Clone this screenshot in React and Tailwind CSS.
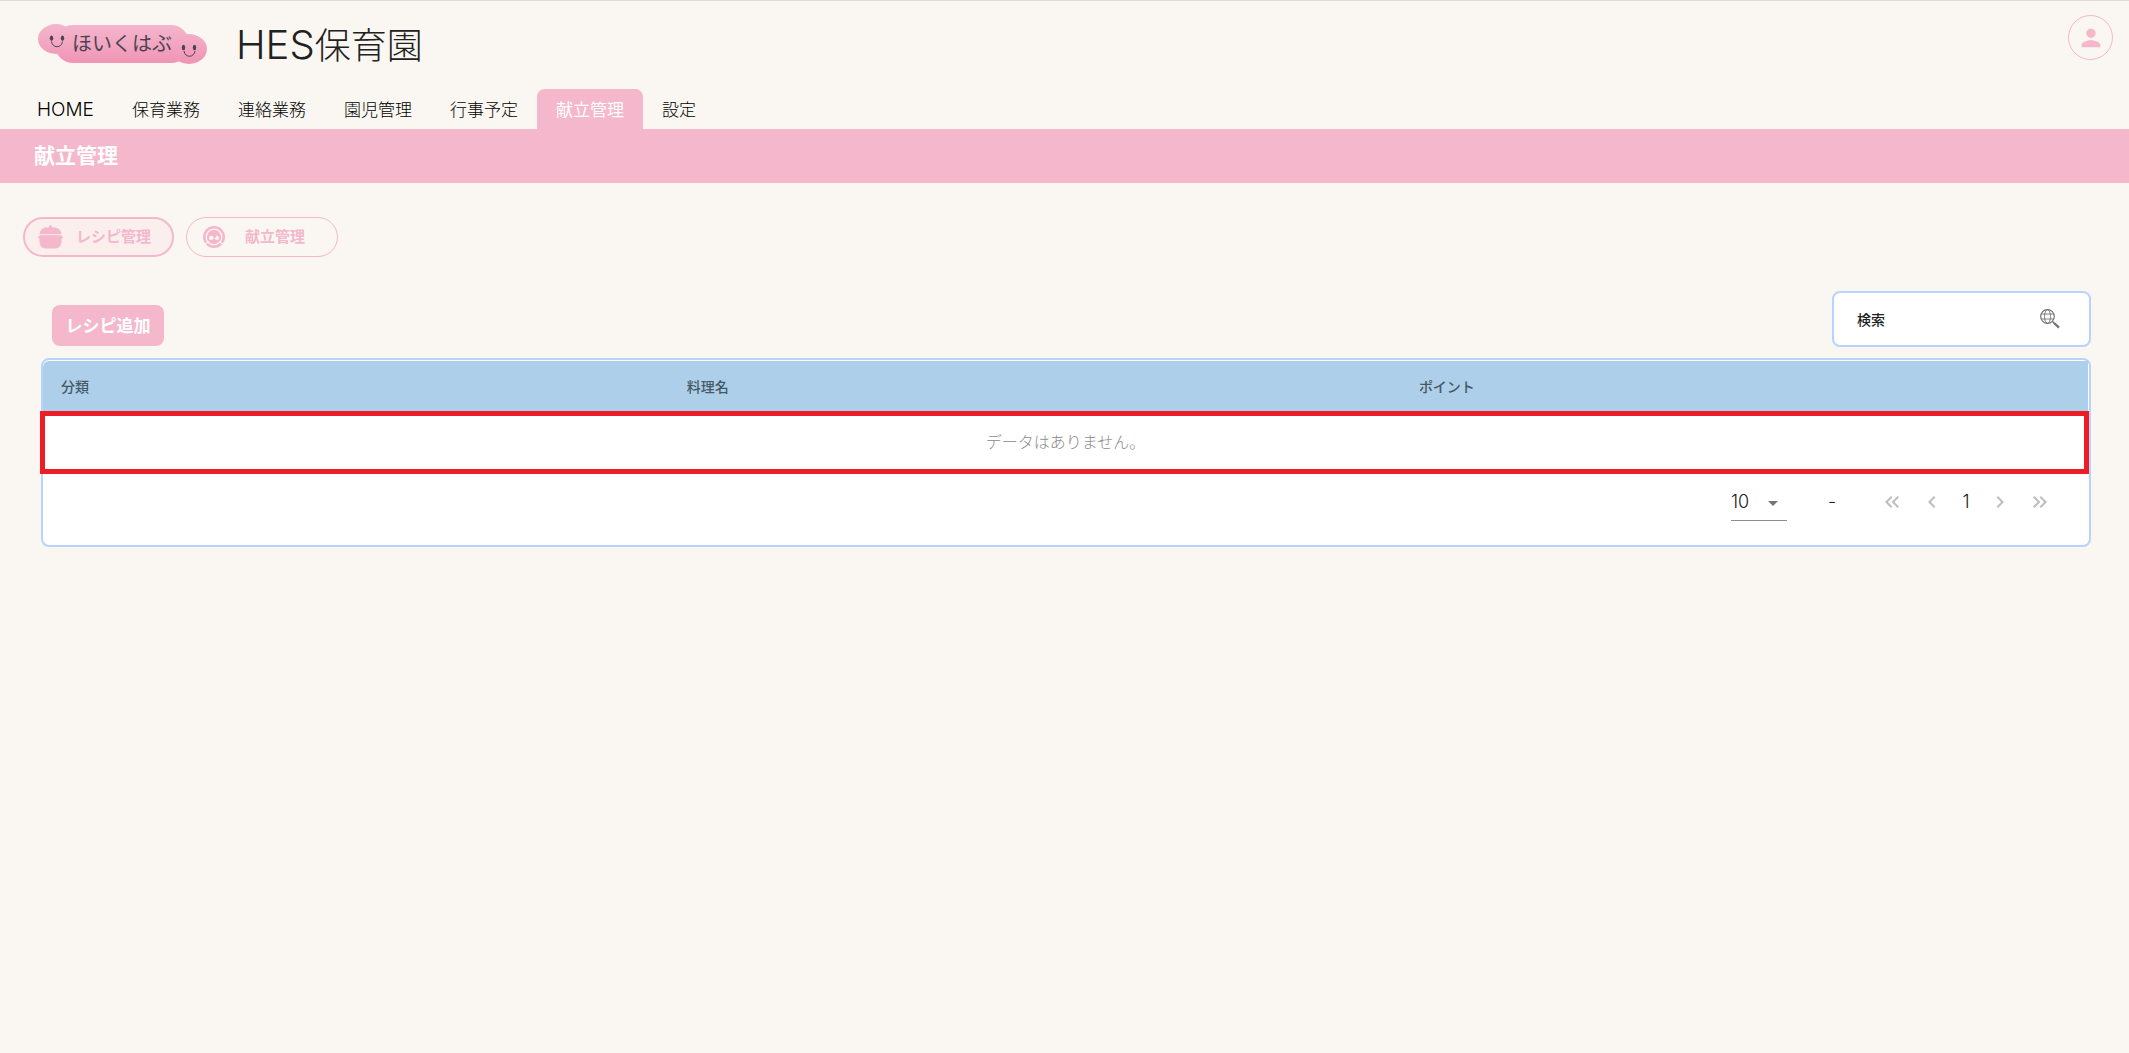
import { useState } from 'react';
import {
  MdPerson,
  MdArrowDropDown,
  MdChevronLeft,
  MdChevronRight,
  MdKeyboardDoubleArrowLeft,
  MdKeyboardDoubleArrowRight,
} from 'react-icons/md';

const navItems = ['HOME', '保育業務', '連絡業務', '園児管理', '行事予定', '献立管理', '設定'];

function Logo() {
  return (
    <svg width="170" height="40" viewBox="0 0 170 40" role="img" aria-label="ほいくはぶ">
      <defs>
        <linearGradient id="logoPink" gradientUnits="userSpaceOnUse" x1="0" y1="0" x2="0" y2="40">
          <stop offset="0" stopColor="#f4b7cd" />
          <stop offset="1" stopColor="#f094b4" />
        </linearGradient>
      </defs>
      <g fill="url(#logoPink)">
        <ellipse cx="18" cy="15" rx="18" ry="15" />
        <rect x="17" y="1" width="134" height="38" rx="18" />
        <ellipse cx="151" cy="25" rx="18" ry="15" />
      </g>
      <g fill="#4a4453">
        <ellipse cx="13.5" cy="14.2" rx="1.7" ry="2.7" />
        <ellipse cx="24.5" cy="14.2" rx="1.7" ry="2.7" />
        <ellipse cx="145.5" cy="23.5" rx="1.7" ry="2.7" />
        <ellipse cx="156.5" cy="23.5" rx="1.7" ry="2.7" />
      </g>
      <g fill="none" stroke="#4a4453" strokeWidth="1">
        <path d="M13.500 17.500c1 7 10 7 11 0" />
        <path d="M146 27c1 7 10 7 11 0" />
      </g>
      <text x="34" y="27" fontSize="20" fill="#4a4453">
        ほいくはぶ
      </text>
    </svg>
  );
}

function PotIcon() {
  return (
    <svg width="26" height="24" viewBox="0 0 26 24" fill="currentColor" aria-hidden="true">
      <circle cx="12.5" cy="2" r="1.7" />
      <path d="M1.500 9.300C2 5 5 2.600 9 2.600h7c4 0 7 2.400 7.500 6.700z" />
      <path d="M1.500 10.200h22v1.300H25v1.600h-1.300c0 7.400-1.700 10.400-6.200 10.400h-10c-4.500 0-6.200-3-6.200-10.400H0v-1.600h1.500z" />
    </svg>
  );
}

function DishIcon() {
  return (
    <svg width="22" height="22" viewBox="0 0 22 22" aria-hidden="true">
      <circle cx="11" cy="11" r="11" fill="#f4b7cc" />
      <circle cx="11" cy="11" r="7.8" fill="none" stroke="#faf7f2" strokeWidth="1.3" />
      <path d="M2 18l4-2.500M20 18l-4-2.500" stroke="#faf7f2" strokeWidth="1.3" />
      <circle cx="8.3" cy="12" r="2.3" fill="#faf7f2" />
      <circle cx="13.7" cy="12" r="2.3" fill="#faf7f2" />
      <circle cx="12.5" cy="11" r="0.9" fill="#f4b7cc" />
      <path d="M6 14.300c2-1 8-1 10 0l-1 2H7z" fill="#f4b7cc" />
    </svg>
  );
}

function GlobeSearchIcon() {
  return (
    <svg width="20" height="20" viewBox="0 0 20 20" fill="none" stroke="#757575" aria-hidden="true">
      <circle cx="7.5" cy="7.5" r="6.8" strokeWidth="1.2" />
      <ellipse cx="7.5" cy="7.5" rx="3" ry="6.8" strokeWidth="0.9" />
      <path d="M1 5h13M1 10h13" strokeWidth="0.9" />
      <path d="M12.500 12.500l2 2" strokeWidth="1.5" />
      <path d="M14 14l5 4.700" strokeWidth="2.4" />
    </svg>
  );
}

function PageButton({ label, children }) {
  return (
    <button type="button" aria-label={label} disabled className="flex size-10 items-center justify-center text-[#bdbdbd]">
      {children}
    </button>
  );
}

export default function App() {
  const [active, setActive] = useState('献立管理');
  const [search, setSearch] = useState('');
  const [pageSize, setPageSize] = useState('10');

  return (
    <div className="min-h-screen border-t border-[#dcdcdc] bg-[#faf7f2] font-['Inter','Noto_Sans_CJK_JP',sans-serif] text-[#212121]">
      <header>
        <div className="flex h-[88px] items-start justify-between pr-4 pl-[38px]">
          <div className="flex items-start gap-7 pt-[23px]">
            <a href="#home">
              <Logo />
            </a>
            <h1 className="-mt-0.5 text-4xl leading-[46px] font-light">
              <span className="text-[40px]">HES</span>保育園
            </h1>
          </div>
          <button
            type="button"
            aria-label="アカウント"
            className="mt-3.5 flex size-[45px] items-center justify-center rounded-full border border-[#f4b7cc] text-[#f4b7cc]"
          >
            <MdPerson size={28} />
          </button>
        </div>
        <nav className="flex pl-[18px] text-[17px] leading-[42px] font-light text-black">
          {navItems.map((item) => (
            <a
              key={item}
              href={`#${item}`}
              onClick={() => setActive(item)}
              className={
                item === active
                  ? 'h-10 rounded-t-lg bg-[#f4b7cc] px-[19px] font-normal text-white'
                  : 'h-10 px-[19px] first:text-[19px]'
              }
            >
              {item}
            </a>
          ))}
        </nav>
      </header>

      <div className="bg-[#f4b7cc] px-[34px] py-3">
        <h2 className="text-[21px] leading-[30px] font-bold text-white">献立管理</h2>
      </div>

      <main>
        <div className="flex gap-3 px-[23px] pt-[34px] text-[15px] font-bold text-[#f4b7cc]">
          <button type="button" className="flex h-10 w-[151px] items-center gap-3 rounded-full border-2 border-[#f4b7cc] bg-[#fbefee] pl-[13px]">
            <PotIcon />
            レシピ管理
          </button>
          <button type="button" className="flex h-10 w-[152px] items-center gap-5 rounded-full border border-[#f4b7cc] pl-4">
            <DishIcon />
            献立管理
          </button>
        </div>

        <section className="mr-[38px] ml-[41px] pt-[34px]">
          <div className="flex items-start justify-between pl-[11px]">
            <button type="button" className="mt-3.5 h-[41px] w-28 rounded-lg bg-[#f4b7cc] pt-0.5 text-[17px] font-bold text-white">
              レシピ追加
            </button>
            <div className="flex h-14 w-[259px] items-center rounded-lg border-2 border-[#b8d3ff] bg-white pr-[29px] pl-[23px]">
              <input
                type="text"
                aria-label="検索"
                value={search}
                onChange={(e) => setSearch(e.target.value)}
                placeholder="検索"
                className="min-w-0 flex-1 pt-0.5 text-sm font-medium outline-none placeholder:text-[#212121]"
              />
              <GlobeSearchIcon />
            </div>
          </div>

          <div className="mt-[11px] rounded-lg border-2 border-[#b8d3ff] bg-white pt-px pb-[15px]">
            <div className="pr-px">
              <table className="w-full table-fixed">
                <thead>
                  <tr className="h-[50px] bg-[#adcfea] text-left text-sm text-[#455a64]">
                    <th className="w-[30.6%] rounded-tl-md px-[18px] pt-0.5 font-medium">分類</th>
                    <th className="w-[35.8%] px-[18px] pt-0.5 font-medium">料理名</th>
                    <th className="px-[18px] pt-0.5 font-medium">ポイント</th>
                  </tr>
                </thead>
                <tbody>
                  <tr className="h-[63px]">
                    <td colSpan={3} className="relative pb-0.5 text-center text-base font-light text-[#8c8c8c]">
                      データはありません。
                      <span className="absolute inset-y-0 -right-px -left-[3px] border-5 border-[#ee1c25]" />
                    </td>
                  </tr>
                </tbody>
              </table>
            </div>

            <div className="flex h-14 items-center justify-end pr-[29px] text-lg font-light">
              <div className="relative mr-[5px] border-b border-[#8c8c8c]">
                <select
                  aria-label="表示件数"
                  value={pageSize}
                  onChange={(e) => setPageSize(e.target.value)}
                  className="block h-9 w-14 appearance-none bg-transparent outline-none"
                >
                  <option>10</option>
                  <option>25</option>
                  <option>50</option>
                </select>
                <MdArrowDropDown size={24} className="pointer-events-none absolute top-[7px] right-0.5 text-[#757575]" />
              </div>
              <span className="w-20 text-center">-</span>
              <PageButton label="最初のページ">
                <MdKeyboardDoubleArrowLeft size={24} />
              </PageButton>
              <PageButton label="前のページ">
                <MdChevronLeft size={24} />
              </PageButton>
              <span className="w-7 text-center">1</span>
              <PageButton label="次のページ">
                <MdChevronRight size={24} />
              </PageButton>
              <PageButton label="最後のページ">
                <MdKeyboardDoubleArrowRight size={24} />
              </PageButton>
            </div>
          </div>
        </section>
      </main>
    </div>
  );
}
